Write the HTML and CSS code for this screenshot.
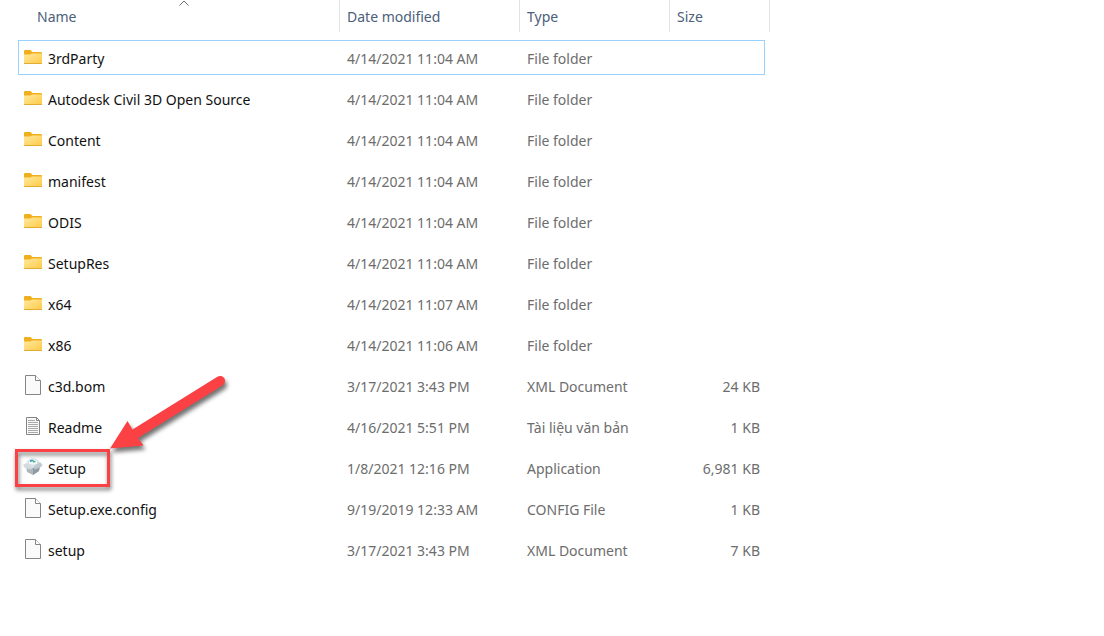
FILE: index.html
```
<!DOCTYPE html>
<html lang="en">
<head>
<meta charset="utf-8">
<title>Files</title>
<link rel="stylesheet" href="styles.css">
</head>
<body>
<svg class="defs" aria-hidden="true">
  <defs>
    <linearGradient id="gold" x1="0" y1="0" x2="1" y2="1">
      <stop offset="0" stop-color="#ffe9a0"/>
      <stop offset="1" stop-color="#ffca45"/>
    </linearGradient>
    <symbol id="folder" viewBox="0 0 20 20">
      <path d="M1 4Q1 3 2 3H7.500L9.500 5H18Q19 5 19 6V10H1Z" fill="#f0b01e"/>
      <path d="M1 7.500H7.500L9 6.500H19V17H1Z" fill="url(#gold)"/>
      <path d="M1 16.500H19" stroke="#e3ad35"/>
    </symbol>
    <symbol id="page" viewBox="0 0 20 20">
      <path d="M2.500 .5H12.500L17.500 5.500V19.500H2.500Z" fill="#fafafa" stroke="#858585"/>
      <path d="M12.500 .5V5.500H17.500" fill="#fff" stroke="#858585"/>
    </symbol>
    <symbol id="text" viewBox="0 0 20 20">
      <path d="M3.500 1.500H13.500L16.500 4.500V18.500H3.500Z" fill="#f8f8f8" stroke="#858585"/>
      <path d="M13.500 1.500V4.500H16.500" fill="none" stroke="#858585"/>
      <path d="M5 4.500H12M5 6.500H15M5 8.500H15M5 10.500H15M5 12.500H15M5 14.500H15M5 16.500H15" stroke="#a9a9a9"/>
    </symbol>
    <symbol id="installer" viewBox="0 0 20 20">
      <path d="M4 4L10 2L16 3.500L17 8L10 11L3 8Z" fill="#e6edf1"/>
      <ellipse cx="10" cy="5" rx="5" ry="3.200" fill="#f5f8fa" stroke="#b5c7d2" stroke-width=".6"/>
      <path d="M7 4.500Q8.500 2.800 10.500 3.800" fill="none" stroke="#2499ba" stroke-width="1.400"/>
      <path d="M10 5L12.500 4.300" stroke="#43b879" stroke-width="1.400"/>
      <path d="M3 9L10 11L17 8.500L16 14L10 18L4 15Z" fill="#adb7be"/>
      <path d="M10 11L17 8.500L16 14L10 18Z" fill="#8e9ba5"/>
      <path d="M3 6L0 8L2 11L8 12.500L10 10Z" fill="#d3dadf"/>
      <path d="M17 5L19.500 8L18 10L12 12.500L10 10Z" fill="#bdc8d0"/>
    </symbol>
  </defs>
</svg>
<main>
<table class="files">
  <colgroup><col class="c-name"><col class="c-date"><col class="c-type"><col class="c-size"><col class="c-edge"></colgroup>
  <thead>
    <tr>
      <th aria-sort="ascending"><button class="head first" type="button">Name<svg class="caret" viewBox="0 0 10 6" aria-hidden="true"><path d="M.5 5.500L5 1L9.500 5.500" fill="none" stroke="#6a6a6a"/></svg></button></th>
      <th><button class="head" type="button">Date modified</button></th>
      <th><button class="head" type="button">Type</button></th>
      <th colspan="2"><button class="head" type="button">Size</button></th>
    </tr>
  </thead>
  <tbody>
    <tr class="selected"><td><span class="name"><svg class="icon"><use href="#folder"/></svg>3rdParty</span></td><td>4/14/2021 11:04 AM</td><td>File folder</td><td class="size"></td></tr>
    <tr><td><span class="name"><svg class="icon"><use href="#folder"/></svg>Autodesk Civil 3D Open Source</span></td><td>4/14/2021 11:04 AM</td><td>File folder</td><td class="size"></td></tr>
    <tr><td><span class="name"><svg class="icon"><use href="#folder"/></svg>Content</span></td><td>4/14/2021 11:04 AM</td><td>File folder</td><td class="size"></td></tr>
    <tr><td><span class="name"><svg class="icon"><use href="#folder"/></svg>manifest</span></td><td>4/14/2021 11:04 AM</td><td>File folder</td><td class="size"></td></tr>
    <tr><td><span class="name"><svg class="icon"><use href="#folder"/></svg>ODIS</span></td><td>4/14/2021 11:04 AM</td><td>File folder</td><td class="size"></td></tr>
    <tr><td><span class="name"><svg class="icon"><use href="#folder"/></svg>SetupRes</span></td><td>4/14/2021 11:04 AM</td><td>File folder</td><td class="size"></td></tr>
    <tr><td><span class="name"><svg class="icon"><use href="#folder"/></svg>x64</span></td><td>4/14/2021 11:07 AM</td><td>File folder</td><td class="size"></td></tr>
    <tr><td><span class="name"><svg class="icon"><use href="#folder"/></svg>x86</span></td><td>4/14/2021 11:06 AM</td><td>File folder</td><td class="size"></td></tr>
    <tr><td><span class="name"><svg class="icon"><use href="#page"/></svg>c3d.bom</span></td><td>3/17/2021 3:43 PM</td><td>XML Document</td><td class="size">24 KB</td></tr>
    <tr><td><span class="name"><svg class="icon"><use href="#text"/></svg>Readme</span></td><td>4/16/2021 5:51 PM</td><td lang="vi">Tài liệu văn bản</td><td class="size">1 KB</td></tr>
    <tr><td class="marked"><span class="name"><svg class="icon"><use href="#installer"/></svg>Setup</span><span class="frame"></span><svg class="arrow" viewBox="100 370 135 90" aria-hidden="true"><path d="M110 448.500L127.500 421L132.500 429.500L217.400 376.700A5 5 0 0 1 222.700 385.200L138 438L143.500 445.500Z" fill="#fb4143"/></svg></td><td>1/8/2021 12:16 PM</td><td>Application</td><td class="size">6,981 KB</td></tr>
    <tr><td><span class="name"><svg class="icon"><use href="#page"/></svg>Setup.exe.config</span></td><td>9/19/2019 12:33 AM</td><td>CONFIG File</td><td class="size">1 KB</td></tr>
    <tr><td><span class="name"><svg class="icon"><use href="#page"/></svg>setup</span></td><td>3/17/2021 3:43 PM</td><td>XML Document</td><td class="size">7 KB</td></tr>
  </tbody>
</table>
</main>
</body>
</html>
```
FILE: styles.css
```
* { box-sizing: border-box; }
body {
  margin: 0;
  background: #fff;
  color: #6d6d6d;
  font: 14px/20px "Noto Sans", "Open Sans", sans-serif;
}
.defs { position: absolute; width: 0; height: 0; }
main { padding-left: 18px; }
.files {
  table-layout: fixed;
  width: 752px;
  margin-top: -6px;
  border-collapse: separate;
  border-spacing: 0 6px;
}
.c-name { width: 322px; }
.c-date { width: 180px; }
.c-type { width: 150px; }
.c-size { width: 95px; }
.c-edge { width: 5px; }
th { height: 34px; padding: 0; vertical-align: top; font-weight: 400; }
.head {
  position: relative;
  display: block;
  width: 100%;
  height: 32px;
  padding: 2px 7px 0;
  border: 0;
  border-right: 1px solid #e3e3e3;
  background: none;
  color: #4c607a;
  font: inherit;
  text-align: left;
}
.head.first { padding-left: 19px; }
.caret { position: absolute; top: 0; left: 161px; width: 10px; height: 6px; }
td {
  height: 35px;
  padding: 2px 7px 0;
  border: 0 solid #99d1ff;
  white-space: nowrap;
}
td:first-child { padding-left: 5px; color: #111; }
.size { padding-right: 5px; text-align: right; }
.selected td { border-width: 1px 0; }
.selected td:first-child { border-left-width: 1px; border-radius: 1px 0 0 1px; padding-left: 4px; }
.selected td:last-child { border-right-width: 1px; border-radius: 0 1px 1px 0; }
.name { display: flex; align-items: center; gap: 5px; height: 20px; }
.icon { flex: none; width: 20px; height: 20px; margin-bottom: 4px; }
.marked { position: relative; }
.frame {
  position: absolute;
  top: -1px;
  left: -3px;
  width: 95px;
  height: 38px;
  border: 3px solid #fb4143;
  filter: drop-shadow(1px 3px 2px #0000008c);
}
.arrow {
  position: absolute;
  top: -80px;
  left: 82px;
  width: 135px;
  height: 90px;
  overflow: visible;
  filter: drop-shadow(2px 4px 2px #0000008c);
}
```
